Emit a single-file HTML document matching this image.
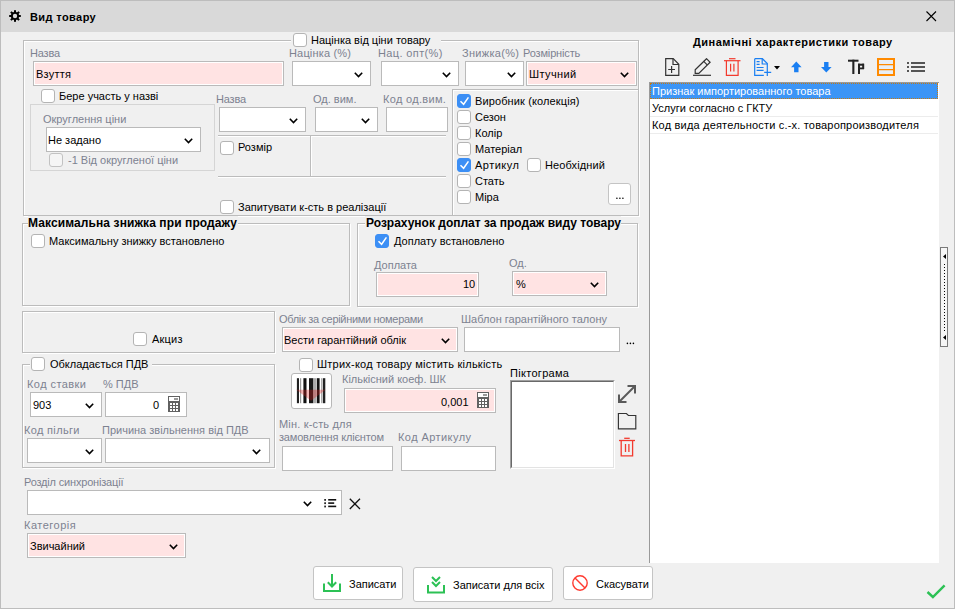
<!DOCTYPE html>
<html><head><meta charset="utf-8">
<style>
*{box-sizing:border-box;margin:0;padding:0}
html,body{width:955px;height:609px;overflow:hidden;background:#f0f0f0;font-family:"Liberation Sans",sans-serif;font-size:11px;color:#000}
#dlg{position:absolute;left:0;top:0;width:955px;height:609px;background:#f0f0f0}
.a{position:absolute}
.t{position:absolute;white-space:nowrap;line-height:13px;font-size:11px}
.l{color:#7d8290}
.b{font-weight:bold;font-size:12px;line-height:14px}
.gb{position:absolute;border:1px solid #bcbcbc;box-shadow:inset 1px 1px 0 #fff,1px 1px 0 #fff}
.in{position:absolute;border:1px solid #bababa;background:#fff;height:25px}
.pk{background:#ffe3e3;box-shadow:inset 0 0 0 1px #fff}
.cb{position:absolute;width:14px;height:14px;border:1px solid #b4b4b4;border-radius:3px;background:#fff}
.cb.on{background:#3c8ff5;border-color:#3c8ff5}
.cb.dis{border-color:#c2c2c2;background:#f5f5f5}
.chev{position:absolute;width:9px;height:6px}
.hl{position:absolute;height:1px;background:#bcbcbc}
.vl{position:absolute;width:1px;background:#bcbcbc}
.btn{position:absolute;background:#fff;border:1px solid #c4c4c4;border-radius:3px}
</style></head><body>
<div id="dlg">
<!-- title bar -->
<div class="a" style="left:0;top:0;width:955px;height:32px;background:#d9d9d9;border-top:1px solid #bdbdbd"></div>
<svg class="a" style="left:9px;top:10px" width="12" height="12" viewBox="0 0 12 12"><g fill="#000"><circle cx="6" cy="6" r="4.1"/><rect x="5" y="0.2" width="2" height="3" transform="rotate(0 6 6)"/><rect x="5" y="0.2" width="2" height="3" transform="rotate(45 6 6)"/><rect x="5" y="0.2" width="2" height="3" transform="rotate(90 6 6)"/><rect x="5" y="0.2" width="2" height="3" transform="rotate(135 6 6)"/><rect x="5" y="0.2" width="2" height="3" transform="rotate(180 6 6)"/><rect x="5" y="0.2" width="2" height="3" transform="rotate(225 6 6)"/><rect x="5" y="0.2" width="2" height="3" transform="rotate(270 6 6)"/><rect x="5" y="0.2" width="2" height="3" transform="rotate(315 6 6)"/></g><circle cx="6" cy="6" r="2.2" fill="#d9d9d9"/></svg>
<div class="t" style="left:30px;top:11px;font-weight:bold;letter-spacing:0.4px">Вид товару</div>
<svg class="a" style="left:926px;top:11px" width="11" height="11" viewBox="0 0 11 11"><path d="M0.5 0.5L10 10M10 0.5L0.5 10" stroke="#000" stroke-width="1.1"/></svg>

<div class="gb" style="left:23px;top:40px;width:616px;height:176px"></div>
<div class="a" style="left:291px;top:36px;width:150px;height:8px;background:#f0f0f0"></div>
<div class="cb" style="left:293px;top:33px"></div>
<div class="t " style="left:311px;top:34px">Націнка від ціни товару</div>
<div class="t l" style="left:30px;top:47px;letter-spacing:-0.2px;">Назва</div>
<div class="in pk" style="left:33px;top:61px;width:251px;height:25px;"></div>
<div class="t " style="left:36px;top:68px;letter-spacing:0.25px;">Взуття</div>
<div class="t l" style="left:289px;top:47px;letter-spacing:0.17px;">Націнка (%)</div>
<div class="in" style="left:292px;top:61px;width:79px;height:25px;"></div>
<svg class="chev" style="left:354px;top:72px" width="9" height="6" viewBox="0 0 9 6"><path d="M0.8 0.8L4.5 4.5L8.2 0.8" fill="none" stroke="#000" stroke-width="1.6"/></svg>
<div class="t l" style="left:378px;top:47px;letter-spacing:0.37px;">Нац. опт(%)</div>
<div class="in" style="left:381px;top:61px;width:78px;height:25px;"></div>
<svg class="chev" style="left:442px;top:72px" width="9" height="6" viewBox="0 0 9 6"><path d="M0.8 0.8L4.5 4.5L8.2 0.8" fill="none" stroke="#000" stroke-width="1.6"/></svg>
<div class="t l" style="left:462px;top:47px;letter-spacing:0.31px;">Знижка(%)</div>
<div class="in" style="left:465px;top:61px;width:59px;height:25px;"></div>
<svg class="chev" style="left:507px;top:72px" width="9" height="6" viewBox="0 0 9 6"><path d="M0.8 0.8L4.5 4.5L8.2 0.8" fill="none" stroke="#000" stroke-width="1.6"/></svg>
<div class="t l" style="left:523px;top:47px;letter-spacing:-0.15px;">Розмірність</div>
<div class="in pk" style="left:526px;top:61px;width:111px;height:25px;"></div>
<div class="t " style="left:529px;top:68px;letter-spacing:0.4px;">Штучний</div>
<svg class="chev" style="left:620px;top:72px" width="9" height="6" viewBox="0 0 9 6"><path d="M0.8 0.8L4.5 4.5L8.2 0.8" fill="none" stroke="#000" stroke-width="1.6"/></svg>
<div class="cb" style="left:41px;top:89px"></div>
<div class="t " style="left:59px;top:90px">Бере участь у назві</div>
<div class="a" style="left:30px;top:104px;width:185px;height:67px;border:1px solid #d5d5d5"></div>
<div class="t l" style="left:43px;top:113px">Округлення ціни</div>
<div class="in" style="left:46px;top:127px;width:155px;height:25px;"></div>
<div class="t " style="left:48px;top:134px">Не задано</div>
<svg class="chev" style="left:184px;top:138px" width="9" height="6" viewBox="0 0 9 6"><path d="M0.8 0.8L4.5 4.5L8.2 0.8" fill="none" stroke="#000" stroke-width="1.6"/></svg>
<div class="cb dis" style="left:49px;top:153px"></div>
<div class="t l" style="left:68px;top:154px">-1 Від округленої ціни</div>
<div class="t l" style="left:216px;top:93px;letter-spacing:-0.2px;">Назва</div>
<div class="in" style="left:219px;top:107px;width:87px;height:25px;"></div>
<svg class="chev" style="left:289px;top:118px" width="9" height="6" viewBox="0 0 9 6"><path d="M0.8 0.8L4.5 4.5L8.2 0.8" fill="none" stroke="#000" stroke-width="1.6"/></svg>
<div class="t l" style="left:313px;top:93px">Од. вим.</div>
<div class="in" style="left:315px;top:107px;width:63px;height:25px;"></div>
<svg class="chev" style="left:361px;top:118px" width="9" height="6" viewBox="0 0 9 6"><path d="M0.8 0.8L4.5 4.5L8.2 0.8" fill="none" stroke="#000" stroke-width="1.6"/></svg>
<div class="t l" style="left:383px;top:93px;letter-spacing:0.32px;">Код од.вим.</div>
<div class="in" style="left:386px;top:107px;width:62px;height:25px;"></div>
<div class="hl" style="left:218px;top:135px;width:228px;box-shadow:0 1px 0 #fff"></div>
<div class="vl" style="left:310px;top:136px;height:40px;box-shadow:1px 0 0 #fff"></div>
<div class="hl" style="left:218px;top:176px;width:228px;box-shadow:0 1px 0 #fff"></div>
<div class="cb" style="left:220px;top:141px"></div>
<div class="t " style="left:238px;top:141px">Розмір</div>
<div class="cb" style="left:220px;top:200px"></div>
<div class="t " style="left:238px;top:201px">Запитувати к-сть в реалізації</div>
<div class="gb" style="left:452px;top:89px;width:187px;height:127px"></div>
<div class="cb on" style="left:457px;top:94px"><svg width="12" height="12" viewBox="0 0 12 12" style="position:absolute;left:0;top:0"><path d="M2.5 6.2L5.6 9.3L10.4 2.4" fill="none" stroke="#fff" stroke-width="1.5"/></svg></div>
<div class="t " style="left:475px;top:95px;letter-spacing:0.12px;">Виробник (колекція)</div>
<div class="cb" style="left:457px;top:110px"></div>
<div class="t " style="left:475px;top:111px">Сезон</div>
<div class="cb" style="left:457px;top:126px"></div>
<div class="t " style="left:475px;top:127px">Колір</div>
<div class="cb" style="left:457px;top:142px"></div>
<div class="t " style="left:475px;top:143px">Матеріал</div>
<div class="cb on" style="left:457px;top:158px"><svg width="12" height="12" viewBox="0 0 12 12" style="position:absolute;left:0;top:0"><path d="M2.5 6.2L5.6 9.3L10.4 2.4" fill="none" stroke="#fff" stroke-width="1.5"/></svg></div>
<div class="t " style="left:475px;top:159px;letter-spacing:0.47px;">Артикул</div>
<div class="cb" style="left:457px;top:174px"></div>
<div class="t " style="left:475px;top:175px">Стать</div>
<div class="cb" style="left:457px;top:190px"></div>
<div class="t " style="left:475px;top:191px">Міра</div>
<div class="cb" style="left:527px;top:158px"></div>
<div class="t " style="left:545px;top:159px;letter-spacing:0.12px;">Необхідний</div>
<div class="btn" style="left:608px;top:183px;width:23px;height:22px"></div>
<svg class="a" style="left:615px;top:197px" width="10" height="3" viewBox="0 0 10 3"><circle cx="1.90" cy="1.30" r="0.8" fill="#000"/><circle cx="4.90" cy="1.30" r="0.8" fill="#000"/><circle cx="7.90" cy="1.30" r="0.8" fill="#000"/></svg>
<div class="gb" style="left:22px;top:223px;width:328px;height:83px"></div>
<div class="a" style="left:28px;top:216px;width:210px;height:10px;background:#f0f0f0"></div>
<div class="t" style="left:28px;top:216px;font-weight:bold;font-size:12px;line-height:14px;letter-spacing:0.1px">Максимальна знижка при продажу</div>
<div class="cb" style="left:31px;top:234px"></div>
<div class="t " style="left:49px;top:235px;">Максимальну знижку встановлено</div>
<div class="gb" style="left:357px;top:223px;width:281px;height:84px"></div>
<div class="a" style="left:365px;top:216px;width:256px;height:10px;background:#f0f0f0"></div>
<div class="t" style="left:366px;top:216px;font-weight:bold;font-size:12px;line-height:14px;letter-spacing:0px">Розрахунок доплат за продаж виду товару</div>
<div class="cb on" style="left:375px;top:234px"><svg width="12" height="12" viewBox="0 0 12 12" style="position:absolute;left:0;top:0"><path d="M2.5 6.2L5.6 9.3L10.4 2.4" fill="none" stroke="#fff" stroke-width="1.5"/></svg></div>
<div class="t " style="left:394px;top:235px;">Доплату встановлено</div>
<div class="t l" style="left:374px;top:259px;">Доплата</div>
<div class="in pk" style="left:376px;top:272px;width:103px;height:25px;"></div>
<div class="t " style="left:463px;top:278px;">10</div>
<div class="t l" style="left:509px;top:257px;">Од.</div>
<div class="in pk" style="left:512px;top:271px;width:95px;height:25px;"></div>
<div class="t " style="left:516px;top:278px;">%</div>
<svg class="chev" style="left:590px;top:282px" width="9" height="6" viewBox="0 0 9 6"><path d="M0.8 0.8L4.5 4.5L8.2 0.8" fill="none" stroke="#000" stroke-width="1.6"/></svg>
<div class="gb" style="left:22px;top:311px;width:253px;height:42px"></div>
<div class="cb" style="left:133px;top:332px"></div>
<div class="t " style="left:152px;top:333px;letter-spacing:0.22px;">Акциз</div>
<div class="gb" style="left:22px;top:364px;width:253px;height:104px"></div>
<div class="a" style="left:30px;top:357px;width:122px;height:10px;background:#f0f0f0"></div>
<div class="cb" style="left:31px;top:357px"></div>
<div class="t " style="left:50px;top:358px;">Обкладається ПДВ</div>
<div class="t l" style="left:27px;top:378px;letter-spacing:0.43px;">Код ставки</div>
<div class="t l" style="left:103px;top:378px;">% ПДВ</div>
<div class="in" style="left:30px;top:392px;width:72px;height:25px;"></div>
<div class="t " style="left:33px;top:399px;">903</div>
<svg class="chev" style="left:85px;top:403px" width="9" height="6" viewBox="0 0 9 6"><path d="M0.8 0.8L4.5 4.5L8.2 0.8" fill="none" stroke="#000" stroke-width="1.6"/></svg>
<div class="in" style="left:105px;top:392px;width:82px;height:25px;"></div>
<div class="t " style="left:153px;top:399px;">0</div>
<svg class="a" style="left:168px;top:396px" width="12" height="16" viewBox="0 0 12 16"><rect x="0" y="0" width="12" height="16" fill="#616161"/><rect x="1" y="1" width="10" height="4" fill="#fff"/><rect x="6" y="2" width="4" height="2" fill="#999"/><rect x="2" y="7" width="2" height="2" fill="#fff"/><rect x="5" y="7" width="2" height="2" fill="#fff"/><rect x="8" y="7" width="2" height="2" fill="#fff"/><rect x="2" y="10" width="2" height="2" fill="#fff"/><rect x="5" y="10" width="2" height="2" fill="#fff"/><rect x="8" y="10" width="2" height="2" fill="#fff"/><rect x="2" y="13" width="2" height="2" fill="#fff"/><rect x="5" y="13" width="2" height="2" fill="#fff"/><rect x="8" y="13" width="2" height="2" fill="#fff"/></svg>
<div class="t l" style="left:24px;top:424px;letter-spacing:0.33px;">Код пільги</div>
<div class="t l" style="left:102px;top:424px;">Причина звільнення від ПДВ</div>
<div class="in" style="left:27px;top:438px;width:75px;height:25px;"></div>
<svg class="chev" style="left:85px;top:449px" width="9" height="6" viewBox="0 0 9 6"><path d="M0.8 0.8L4.5 4.5L8.2 0.8" fill="none" stroke="#000" stroke-width="1.6"/></svg>
<div class="in" style="left:105px;top:438px;width:165px;height:25px;"></div>
<svg class="chev" style="left:252px;top:449px" width="9" height="6" viewBox="0 0 9 6"><path d="M0.8 0.8L4.5 4.5L8.2 0.8" fill="none" stroke="#000" stroke-width="1.6"/></svg>
<div class="t l" style="left:279px;top:313px;letter-spacing:-0.32px;">Облік за серійними номерами</div>
<div class="in pk" style="left:282px;top:327px;width:176px;height:25px;"></div>
<div class="t " style="left:284px;top:334px;">Вести гарантійний облік</div>
<svg class="chev" style="left:441px;top:338px" width="9" height="6" viewBox="0 0 9 6"><path d="M0.8 0.8L4.5 4.5L8.2 0.8" fill="none" stroke="#000" stroke-width="1.6"/></svg>
<div class="t l" style="left:461px;top:313px;">Шаблон гарантійного талону</div>
<div class="in" style="left:464px;top:327px;width:156px;height:25px;"></div>
<svg class="a" style="left:626px;top:342px" width="10" height="3" viewBox="0 0 10 3"><circle cx="1.40" cy="1.40" r="0.8" fill="#000"/><circle cx="4.40" cy="1.40" r="0.8" fill="#000"/><circle cx="7.40" cy="1.40" r="0.8" fill="#000"/></svg>
<div class="cb" style="left:299px;top:358px"></div>
<div class="t " style="left:317px;top:358px;letter-spacing:0.23px;">Штрих-код товару містить кількість</div>
<div class="btn" style="left:291px;top:373px;width:41px;height:36px;border-color:#b8b8b8"></div>
<div class="t l" style="left:342px;top:373px;">Кількісний коеф. ШК</div>
<div class="in pk" style="left:344px;top:388px;width:152px;height:25px;"></div>
<div class="t " style="left:441px;top:396px;">0,001</div>
<svg class="a" style="left:477px;top:392px" width="12" height="16" viewBox="0 0 12 16"><rect x="0" y="0" width="12" height="16" fill="#616161"/><rect x="1" y="1" width="10" height="4" fill="#fff"/><rect x="6" y="2" width="4" height="2" fill="#999"/><rect x="2" y="7" width="2" height="2" fill="#fff"/><rect x="5" y="7" width="2" height="2" fill="#fff"/><rect x="8" y="7" width="2" height="2" fill="#fff"/><rect x="2" y="10" width="2" height="2" fill="#fff"/><rect x="5" y="10" width="2" height="2" fill="#fff"/><rect x="8" y="10" width="2" height="2" fill="#fff"/><rect x="2" y="13" width="2" height="2" fill="#fff"/><rect x="5" y="13" width="2" height="2" fill="#fff"/><rect x="8" y="13" width="2" height="2" fill="#fff"/></svg>
<div class="t l" style="left:279px;top:418px;letter-spacing:0.17px;">Мін. к-сть для</div>
<div class="t l" style="left:279px;top:431px;letter-spacing:-0.18px;">замовлення клієнтом</div>
<div class="t l" style="left:398px;top:431px;letter-spacing:0.43px;">Код Артикулу</div>
<div class="in" style="left:282px;top:446px;width:111px;height:25px;"></div>
<div class="in" style="left:401px;top:446px;width:95px;height:25px;"></div>
<div class="t " style="left:510px;top:367px;letter-spacing:0.3px;">Піктограма</div>
<div class="a" style="left:510px;top:380px;width:105px;height:89px;background:#fff;border-top:1px solid #a0a0a0;border-left:1px solid #a0a0a0;border-right:1px solid #fff;border-bottom:1px solid #fff"><div style="position:absolute;left:0;top:0;right:0;bottom:0;border-top:1px solid #696969;border-left:1px solid #696969;border-right:1px solid #e3e3e3;border-bottom:1px solid #e3e3e3"></div></div>
<div class="t l" style="left:24px;top:476px;letter-spacing:-0.18px;">Розділ синхронізації</div>
<div class="in" style="left:27px;top:490px;width:315px;height:25px;"></div>
<svg class="chev" style="left:303px;top:501px" width="9" height="6" viewBox="0 0 9 6"><path d="M0.8 0.8L4.5 4.5L8.2 0.8" fill="none" stroke="#000" stroke-width="1.6"/></svg>
<div class="t l" style="left:24px;top:519px;letter-spacing:0.5px;">Категорія</div>
<div class="in pk" style="left:27px;top:533px;width:159px;height:25px;"></div>
<div class="t " style="left:30px;top:540px;">Звичайний</div>
<svg class="chev" style="left:169px;top:544px" width="9" height="6" viewBox="0 0 9 6"><path d="M0.8 0.8L4.5 4.5L8.2 0.8" fill="none" stroke="#000" stroke-width="1.6"/></svg>
<div class="btn" style="left:313px;top:566px;width:90px;height:34px"></div>
<div class="t " style="left:349px;top:578px;">Записати</div>
<div class="btn" style="left:413px;top:567px;width:140px;height:35px"></div>
<div class="t " style="left:453px;top:579px;">Записати для всіх</div>
<div class="btn" style="left:563px;top:566px;width:90px;height:34px"></div>
<div class="t " style="left:596px;top:578px;">Скасувати</div>
<div class="t" style="left:693px;top:36px;font-weight:bold;letter-spacing:0.5px">Динамічні характеристики товару</div>
<div class="a" style="left:649px;top:82px;width:290px;height:481px;background:#fff;border-left:1px solid #9a9a9a;border-top:1px solid #9a9a9a"></div>
<div class="a" style="left:650px;top:83px;width:288px;height:16px;background:#3c95f6;outline:1px dotted #c77a10;outline-offset:-1px"></div>
<div class="t " style="left:652px;top:85px;color:#fff">Признак импортированного товара</div>
<div class="hl" style="left:650px;top:116px;width:288px;background:#ececec"></div>
<div class="t " style="left:652px;top:102px;">Услуги согласно с ГКТУ</div>
<div class="hl" style="left:650px;top:133px;width:288px;background:#ececec"></div>
<div class="t " style="left:652px;top:119px;letter-spacing:0.19px;">Код вида деятельности с.-х. товаропроизводителя</div>
<svg class="a" style="left:940px;top:247px" width="8" height="100" viewBox="0 0 8 100"><rect x="0.5" y="0.5" width="7" height="99" fill="#f6f6f6" stroke="#7a7a7a"/><path d="M3 9.5L6 7V12Z" fill="#000"/><path d="M3 90.5L6 88V93Z" fill="#000"/><rect x="4" y="17" width="1" height="1" fill="#000"/><rect x="4" y="20" width="1" height="1" fill="#000"/><rect x="4" y="23" width="1" height="1" fill="#000"/><rect x="4" y="26" width="1" height="1" fill="#000"/><rect x="4" y="29" width="1" height="1" fill="#000"/><rect x="4" y="32" width="1" height="1" fill="#000"/><rect x="4" y="35" width="1" height="1" fill="#000"/><rect x="4" y="38" width="1" height="1" fill="#000"/><rect x="4" y="41" width="1" height="1" fill="#000"/><rect x="4" y="44" width="1" height="1" fill="#000"/><rect x="4" y="47" width="1" height="1" fill="#000"/><rect x="4" y="50" width="1" height="1" fill="#000"/><rect x="4" y="53" width="1" height="1" fill="#000"/><rect x="4" y="56" width="1" height="1" fill="#000"/><rect x="4" y="59" width="1" height="1" fill="#000"/><rect x="4" y="62" width="1" height="1" fill="#000"/><rect x="4" y="65" width="1" height="1" fill="#000"/><rect x="4" y="68" width="1" height="1" fill="#000"/><rect x="4" y="71" width="1" height="1" fill="#000"/><rect x="4" y="74" width="1" height="1" fill="#000"/><rect x="4" y="77" width="1" height="1" fill="#000"/><rect x="4" y="80" width="1" height="1" fill="#000"/><rect x="4" y="83" width="1" height="1" fill="#000"/></svg>
<!--G2-->
<div class="a" style="left:0;top:0;width:1px;height:609px;background:#bdbdbd"></div>
<div class="a" style="left:954px;top:0;width:1px;height:609px;background:#bdbdbd"></div>
<div class="a" style="left:0;top:608px;width:955px;height:1px;background:#bdbdbd"></div>
<svg class="a" style="left:665px;top:58px" width="15" height="18" viewBox="0 0 15 18"><g fill="none" stroke="#333" stroke-width="1.2"><path d="M0.7 0.7H8.2L13.8 6.3V17.3H0.7Z"/><path d="M8 0.7V6.5H13.8"/><path d="M3.2 11.5H10M6.6 8V15"/></g></svg>
<svg class="a" style="left:693px;top:58px" width="19" height="18" viewBox="0 0 19 18"><g fill="none" stroke="#333" stroke-width="1.2"><path d="M0 17.3H18"/><path d="M2.2 11.8L13.5 0.7L17.1 4.3L5.8 15.4H2.2Z"/><path d="M10.5 3.1L14.2 6.8"/></g></svg>
<svg class="a" style="left:724px;top:58px" width="17" height="18" viewBox="0 0 17 18"><g fill="none" stroke="#f23a2e" stroke-width="1.2"><path d="M0 2.7H16.5"/><path d="M5 0.7H11.5"/><path d="M2.4 2.7V17.3H14.1V2.7"/><path d="M6.6 5.8V13.6M9.9 5.8V13.6"/></g></svg>
<svg class="a" style="left:754px;top:58px" width="18" height="18" viewBox="0 0 18 18"><g fill="none" stroke="#1a7ff2" stroke-width="1.2"><path d="M0.7 0.7H8.4L13.3 5.6V11M9.8 17.3H0.7V0.7"/><path d="M8.2 0.7V6H13.3"/><path d="M2.6 3.6H5.6M2.6 6.4H5.6M2.6 9.5H9.6M2.6 12.3H9.6"/><path d="M10.2 14.4H17.2M13.3 11V18"/></g></svg>
<svg class="a" style="left:774px;top:66px" width="6" height="4" viewBox="0 0 6 4"><path d="M0 0H6L3 3.6Z" fill="#000"/></svg>
<svg class="a" style="left:791px;top:61px" width="11" height="12" viewBox="0 0 11 12"><path d="M0 6.3L5.3 0.6L10.6 6.3H7.5V11.3H3.1V6.3Z" fill="#1a7ff2"/></svg>
<svg class="a" style="left:821px;top:62px" width="11" height="11" viewBox="0 0 11 11"><path d="M3.1 0H7.5V5H10.6L5.3 10.6L0 5H3.1Z" fill="#1a7ff2"/></svg>
<svg class="a" style="left:848px;top:59px" width="17" height="16" viewBox="0 0 17 16"><g fill="#222"><rect x="0" y="0.7" width="10.5" height="2"/><rect x="4.3" y="0.7" width="2.1" height="14.3"/><rect x="10" y="4.7" width="2" height="10.3"/><rect x="10" y="4.7" width="6" height="2"/><rect x="14.2" y="4.7" width="2" height="5.3"/><rect x="10" y="8.5" width="6" height="1.8"/></g></svg>
<svg class="a" style="left:877px;top:58px" width="18" height="18" viewBox="0 0 18 18"><rect x="1" y="1" width="16" height="16" fill="#e9eef4" stroke="#ff8a00" stroke-width="2"/><path d="M1 6.6H17M1 11.6H17" stroke="#ff8a00" stroke-width="1.3"/></svg>
<svg class="a" style="left:907px;top:62px" width="19" height="11" viewBox="0 0 19 11"><g fill="#555"><rect x="0" y="0" width="2" height="2"/><rect x="0" y="4" width="2" height="2"/><rect x="0" y="8" width="2" height="2"/><rect x="4" y="0" width="14" height="2"/><rect x="4" y="4" width="14" height="2"/><rect x="4" y="8" width="14" height="2"/></g></svg>
<svg class="a" style="left:323px;top:574px" width="19" height="19" viewBox="0 0 19 19"><g fill="none" stroke="#2cc155" stroke-width="2"><path d="M1 9.5V17H17V9.5"/><path d="M9 0V12.5"/><path d="M4.8 8.3L9 12.5L13.2 8.3"/></g></svg>
<svg class="a" style="left:427px;top:576px" width="19" height="18" viewBox="0 0 19 18"><g fill="none" stroke="#2cc155" stroke-width="2"><path d="M1 9V16.5H17V9"/><path d="M5 1L9 5L13 1"/><path d="M5 6L9 10L13 6"/></g></svg>
<svg class="a" style="left:572px;top:575px" width="17" height="17" viewBox="0 0 17 17"><g fill="none" stroke="#ff3a30" stroke-width="1.4"><circle cx="8" cy="8" r="7.2"/><path d="M3 3L13 13"/></g></svg>
<svg class="a" style="left:295px;top:378px" width="32" height="26" viewBox="0 0 32 26"><rect x="1.9" y="0.2" width="2.1" height="25" fill="#222"/><rect x="5" y="0.2" width="1.2" height="25" fill="#999"/><rect x="8.4" y="0.2" width="3.1" height="25" fill="#111"/><rect x="14" y="0.2" width="4.4" height="25" fill="#181818"/><rect x="18.7" y="0.2" width="2.5" height="25" fill="#aaa"/><rect x="21.8" y="0.2" width="2.8" height="25" fill="#111"/><rect x="26.2" y="0.2" width="0.9" height="25" fill="#999"/><rect x="27.8" y="0.2" width="2.5" height="25" fill="#222"/><path d="M1.2 11.8H30.6L16 22.7Z" fill="#e02020" opacity="0.32"/></svg>
<svg class="a" style="left:617px;top:384px" width="20" height="20" viewBox="0 0 20 20"><g fill="none" stroke="#5a5a5a" stroke-width="2"><path d="M2.5 17.5L17.5 2.5"/><path d="M10.5 2H18V9.5"/><path d="M2 10.5V18H9.5"/></g></svg>
<svg class="a" style="left:617px;top:412px" width="20" height="18" viewBox="0 0 20 18"><path d="M1.4 1.5H9.4L11.4 3.5H18.8V16.8H1.4Z" fill="none" stroke="#333" stroke-width="1.15"/></svg>
<svg class="a" style="left:619px;top:437px" width="17" height="20" viewBox="0 0 17 20"><g fill="none" stroke="#f23a2e" stroke-width="1.3"><path d="M0 3.5H16"/><path d="M5.2 1.3H10.7"/><path d="M2.2 3.5V18.8H13.6V3.5"/><path d="M6.5 7V15M9.9 7V15"/></g></svg>
<svg class="a" style="left:324px;top:499px" width="13" height="9" viewBox="0 0 13 9"><g fill="#111"><rect x="0.3" y="0" width="1.6" height="1.8"/><rect x="0.3" y="3.3" width="1.6" height="1.8"/><rect x="0.3" y="6.6" width="1.6" height="1.8"/><rect x="4.2" y="0" width="8" height="1.6"/><rect x="4.2" y="3.3" width="6" height="1.6"/><rect x="4.2" y="6.6" width="8" height="1.6"/></g></svg>
<svg class="a" style="left:349px;top:498px" width="12" height="12" viewBox="0 0 12 12"><path d="M0.8 0.8L11 11M11 0.8L0.8 11" stroke="#111" stroke-width="1.3"/></svg>
<svg class="a" style="left:926px;top:583px" width="20" height="16" viewBox="0 0 20 16"><path d="M1.5 9L6.9 14L18.6 2.3" fill="none" stroke="#2cc155" stroke-width="2.4"/></svg>
<!--ICONS-->
</div>
</body></html>
